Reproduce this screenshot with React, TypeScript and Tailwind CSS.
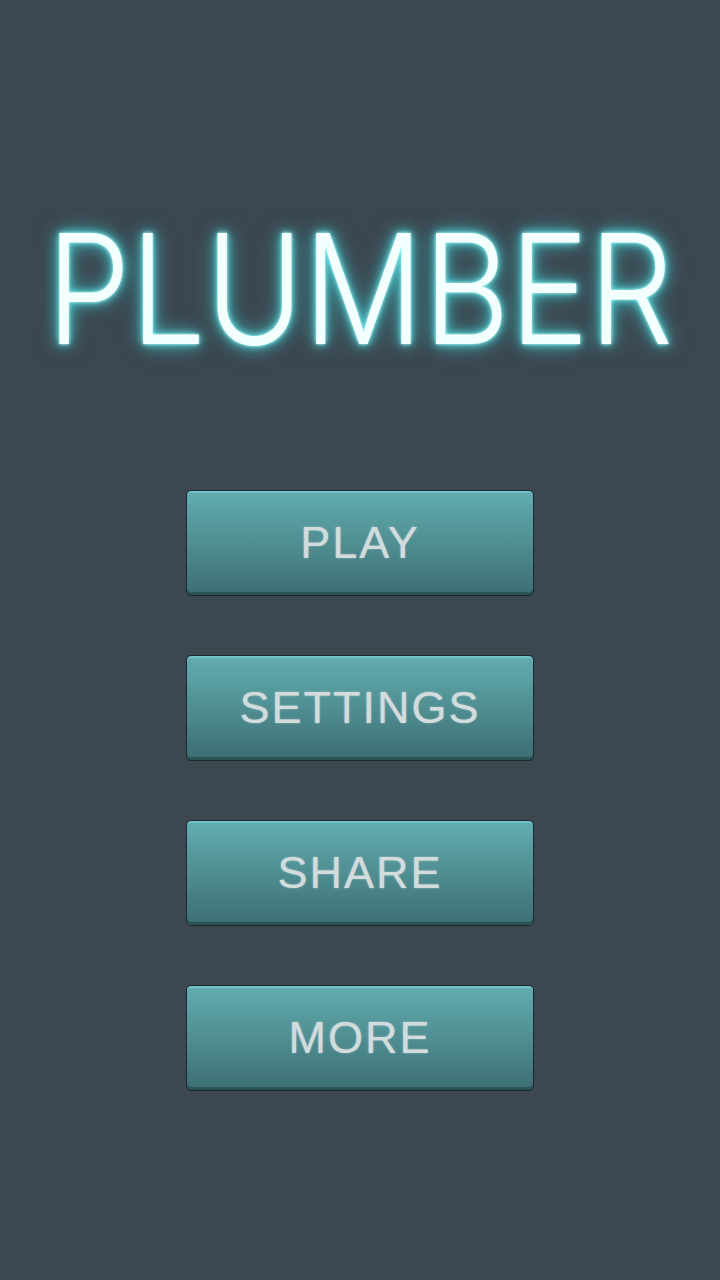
const buttons = ["PLAY", "SETTINGS", "SHARE", "MORE"];

function MenuButton({ label }: { label: string }) {
  return (
    <button className="flex h-[106px] w-[348px] items-center justify-center rounded-[5px] border border-[#1c282d] bg-gradient-to-b from-[#62adb1] via-[#4f8e92] to-[#3c6e72] shadow-[inset_0_2px_0_#70c4c8,inset_0_-3px_0_#2d5256]">
      <span className="font-['Liberation_Sans',sans-serif] text-[45px] font-normal tracking-[2px] text-[#d3dcdd] [text-shadow:0_0_2px_rgba(220,230,232,0.6)]">
        {label}
      </span>
    </button>
  );
}

export default function App() {
  return (
    <div className="flex min-h-[1280px] w-full flex-col items-center overflow-hidden bg-[#3c4750]">
      <h1 className="mt-[197px] scale-x-[0.87] font-['Inter',sans-serif] text-[153px] leading-[184px] font-light whitespace-nowrap text-[#f4ffff] [text-shadow:0_0_3px_#b5fbfb,0_0_8px_#6fe8ea,0_0_16px_#3fc6cc,0_0_26px_rgba(63,198,204,0.5)]">
        PLUMBER
      </h1>
      <div className="mt-[109px] flex flex-col gap-[59px]">
        {buttons.map((b) => (
          <MenuButton key={b} label={b} />
        ))}
      </div>
    </div>
  );
}
